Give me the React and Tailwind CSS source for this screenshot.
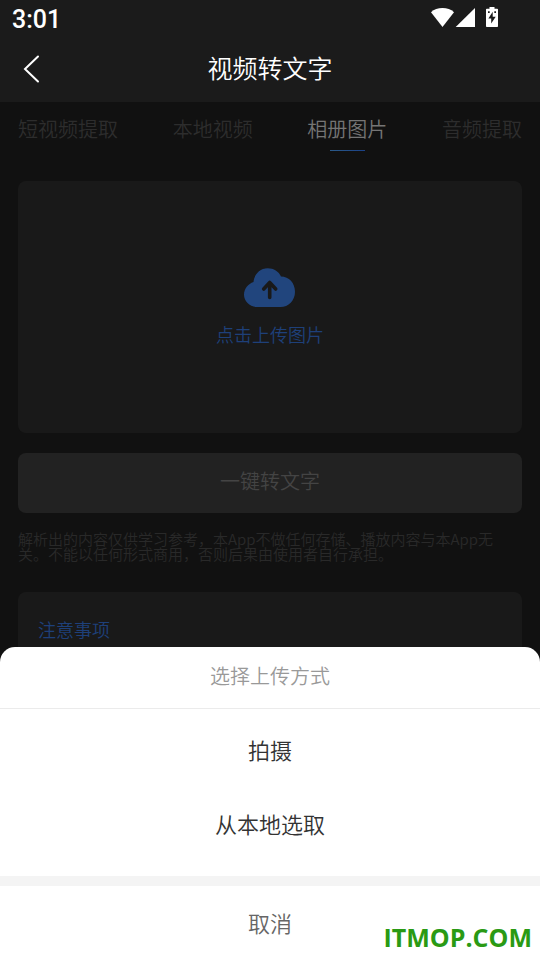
const tabs = [
  { label: '短视频提取' },
  { label: '本地视频' },
  { label: '相册图片', active: true },
  { label: '音频提取' },
];

const options = ['拍摄', '从本地选取'];

const StatusBar = () => (
  <div className="flex h-9 items-center justify-between pl-3 pr-[41px]">
    <span className="pt-1 font-['Roboto'] text-[25px] font-medium leading-9">3:01</span>
    <div className="flex items-center pb-0.5">
      {/* wifi */}
      <svg width="24" height="20" viewBox="0 0 24 20" fill="currentColor">
        <path d="M1 5.200C4 2.400 8 1 12.500 1s8.500 1.400 11.500 4.200L12.500 20z" />
      </svg>
      {/* signal */}
      <svg width="21" height="20" viewBox="0 0 21 20" fill="currentColor">
        <path d="M21 1V20H1.700z" />
      </svg>
      {/* battery */}
      <svg className="ml-2.5" width="14" height="20" viewBox="0 0 14 20" fill="currentColor">
        <path
          fillRule="evenodd"
          d="M4.5 0h5v1.700H12.200a0.800 0.800 0 0 1 0.800 0.800V19.200a0.800 0.800 0 0 1-0.800 0.800H1.800a0.800 0.800 0 0 1-0.800-0.800V2.500a0.800 0.800 0 0 1 0.800-0.800h2.700zM3 4.300v1.700h1.700V4.300zM9.300 4.300v1.700h1.700V4.300zM7.700 4.800L3.400 11.600H6.200V16.600L10.700 9.700H7.700z"
        />
      </svg>
    </div>
  </div>
);

const CloudUpload = () => (
  <svg width="52" height="40" viewBox="0 0 52 40" fill="none">
    <path
      d="M13 40C6 40 0 34.500 0 27.700C0 21.500 4.200 17 9.500 15C10 7.500 16 1.300 23.700 1.300C29.700 1.300 34.800 4.500 37 9.500C45 9.500 51 16 51 24.700C51 33.500 44.500 40 36.500 40z"
      fill="#21457d"
    />
    <path
      d="M25.700 30.500V15.500M19.700 22L25.700 15.500L31.700 22"
      stroke="#191919"
      strokeWidth="3.600"
      strokeLinecap="round"
      strokeLinejoin="round"
    />
  </svg>
);

const UploadSheet = () => (
  <section className="absolute inset-x-0 bottom-0 overflow-hidden rounded-t-[15px] bg-white text-[22px] text-[#333333]">
    <h2 className="border-b border-[#ebebeb] pb-[18px] pt-3.5 text-center text-[20px] leading-[29px] text-[#999999]">
      选择上传方式
    </h2>
    <div className="pb-4 pt-[3px]">
      {options.map((option) => (
        <button key={option} type="button" className="block h-[74px] w-full">
          {option}
        </button>
      ))}
    </div>
    <div className="h-2.5 bg-[#f4f4f4]" />
    <button type="button" className="block h-[74px] w-full pb-0.5 text-[#666666]">
      取消
    </button>
    <span className="absolute bottom-[5px] right-2 font-['Open_Sans',sans-serif] text-[25px] font-bold leading-9 text-[#2a9a14]">
      ITMOP.COM
    </span>
  </section>
);

export default function App() {
  return (
    <div className="relative h-screen overflow-hidden bg-[#111111] font-['Noto_Sans_CJK_SC',sans-serif] font-[350]">
      <header className="bg-[#1b1b1b] text-white">
        <StatusBar />
        <div className="relative flex h-[66px] items-center justify-center">
          <button type="button" aria-label="返回" className="absolute left-5">
            <svg width="24" height="28" viewBox="0 0 24 28" fill="none" stroke="currentColor" strokeWidth="2">
              <path d="M18 1.500L5 14L18 26.500" strokeLinecap="round" />
            </svg>
          </button>
          <h1 className="pb-1 text-[25px] leading-9">视频转文字</h1>
        </div>
      </header>

      {/* tabs */}
      <nav className="flex justify-between px-[18px] pt-3 text-[20px] leading-[29px]">
        {tabs.map((tab) => (
          <button
            key={tab.label}
            type="button"
            className={`flex flex-col items-center gap-[7px] ${tab.active ? 'text-[#757575]' : 'text-[#2d2d2d]'}`}
          >
            {tab.label}
            {tab.active && <span className="h-px w-[35px] bg-linear-to-r from-[#2c5a88] to-[#1b4187]" />}
          </button>
        ))}
      </nav>

      <main className="px-[18px] pt-[30px]">
        <button
          type="button"
          className="flex h-[252px] w-full flex-col items-center justify-center gap-3.5 rounded-lg bg-[#191919] text-[18px] leading-[27px] text-[#1e4079]"
        >
          <CloudUpload />
          点击上传图片
        </button>

        <button
          type="button"
          className="mt-5 h-[60px] w-full rounded-lg bg-[#222222] pb-1 text-[20px] text-[#444444]"
        >
          一键转文字
        </button>

        <p className="mt-[18px] text-[15px] leading-[15px] text-[#292929]">
          解析出的内容仅供学习参考，本App不做任何存储、播放内容与本App无关。不能以任何形式商用，否则后果由使用者自行承担。
        </p>

        <section className="mt-[31px] h-60 rounded-lg bg-[#191919] px-5 py-6">
          <h2 className="text-[18px] leading-[27px] text-[#1e4079]">注意事项</h2>
        </section>
      </main>

      <UploadSheet />
    </div>
  );
}
